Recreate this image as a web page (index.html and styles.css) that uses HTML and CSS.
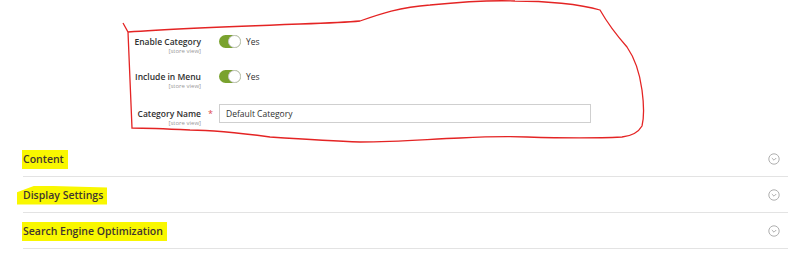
FILE: index.html
```html
<!DOCTYPE html>
<html lang="en">
<head>
    <meta charset="UTF-8">
    <title>Category</title>
    <link rel="stylesheet" href="styles.css">
</head>
<body>
<div class="page">

    <!-- General fields -->
    <fieldset class="general">
        <div class="field">
            <div class="field-label">
                <label>Enable Category</label>
                <span class="scope">[store view]</span>
            </div>
            <div class="field-control">
                <span class="switch"></span>
                <span class="switch-text">Yes</span>
            </div>
        </div>
        <div class="field">
            <div class="field-label">
                <label>Include in Menu</label>
                <span class="scope">[store view]</span>
            </div>
            <div class="field-control">
                <span class="switch"></span>
                <span class="switch-text">Yes</span>
            </div>
        </div>
        <div class="field field-name">
            <div class="field-label">
                <label class="required">Category Name</label>
                <span class="scope">[store view]</span>
            </div>
            <div class="field-control">
                <input class="input-text" type="text" value="Default Category">
            </div>
        </div>
    </fieldset>

    <!-- Collapsible sections -->
    <div class="sections">
        <div class="section">
            <span class="section-title"><mark class="hl">Content</mark></span>
            <svg class="chevron" width="12" height="12" viewBox="0 0 12 12"><circle cx="6" cy="6" r="5.2"/><path d="M3.8 5 L6 7.2 L8.2 5"/></svg>
        </div>
        <div class="section">
            <span class="section-title"><mark class="hl hl-slant">Display Settings</mark></span>
            <svg class="chevron" width="12" height="12" viewBox="0 0 12 12"><circle cx="6" cy="6" r="5.2"/><path d="M3.8 5 L6 7.2 L8.2 5"/></svg>
        </div>
        <div class="section">
            <span class="section-title"><mark class="hl">Search Engine Optimization</mark></span>
            <svg class="chevron" width="12" height="12" viewBox="0 0 12 12"><circle cx="6" cy="6" r="5.2"/><path d="M3.8 5 L6 7.2 L8.2 5"/></svg>
        </div>
    </div>

    <!-- Hand drawn annotation -->
    <svg class="annotation" width="800" height="254" viewBox="0 0 800 254">
        <path d="M123,23 L128,32 C170,29 220,27 300,24 C330,23 350,22 360,21 C380,14 400,7 430,5 C460,2 490,0 515,1 C545,1 580,4 600,10 C604,17 612,30 627,47 C636,60 640,75 642,90 C644,105 644,118 642,126 C638,133 632,136 622,137 C600,138 560,138 527,137 C500,136 480,137 460,138 C430,139 400,142 360,142 C330,141 300,139 270,137 C240,133 210,130 190,130 C170,129 150,128 132,128 C131,100 129,60 128,32"/>
    </svg>
</div>
</body>
</html>
```
FILE: styles.css
```css
/* General */
body {
    margin: 0;
    padding: 0;
    background: #fff;
    font-family: 'Open Sans', 'Liberation Sans', sans-serif;
    color: #303030;
}

.page {
    position: relative;
    width: 800px;
    height: 254px;
    overflow: hidden;
}

/* Fields */
.general {
    box-sizing: border-box;
    height: 141px;
    margin: 0;
    border: 0;
    padding: 36px 0 0 100px;
}

.field {
    display: grid;
    grid-template-columns: 101px 372px;
    column-gap: 18px;
    align-items: start;
    margin-bottom: 16px;
}

.field:nth-child(2) {
    margin-bottom: 14px;
}

.field-label {
    display: flex;
    flex-direction: column;
    text-align: right;
}

.field-label label {
    position: relative;
    font-size: 8.5px;
    line-height: 11px;
    font-weight: 600;
    color: #303030;
}

.field-label label.required::after {
    content: '*';
    position: absolute;
    right: -12px;
    top: 0;
    color: #e04848;
    font-size: 9px;
    font-weight: 400;
}

.scope {
    font-size: 6px;
    line-height: 8px;
    color: #999;
}

.field-control {
    display: flex;
    align-items: center;
    height: 11px;
}

/* Toggle switch */
.switch {
    position: relative;
    box-sizing: border-box;
    width: 22px;
    height: 13px;
    border-radius: 7px;
    background: #79a22e;
}

.switch::after {
    content: '';
    position: absolute;
    right: 0;
    top: 0;
    box-sizing: border-box;
    width: 13px;
    height: 13px;
    border-radius: 50%;
    background: #fff;
    border: 1px solid #c8c8c8;
}

.switch-text {
    margin-left: 5px;
    font-size: 8.5px;
    color: #303030;
}

.field-name .field-label {
    padding-top: 4px;
}

.field-name .field-control {
    height: 19px;
}

.input-text {
    box-sizing: border-box;
    width: 373px;
    height: 19px;
    margin: 0;
    padding: 0 6px;
    border: 1px solid #cfcfcf;
    font-family: 'Open Sans', 'Liberation Sans', sans-serif;
    font-size: 8.5px;
    color: #303030;
    outline: none;
}

/* Sections */
.sections {
    margin-left: 23px;
    width: 765px;
}

.section {
    display: flex;
    justify-content: space-between;
    align-items: center;
    height: 35px;
    padding-right: 8px;
    border-bottom: 1px solid #e3e3e3;
}

.section-title {
    font-size: 10.5px;
    font-weight: 600;
    color: #41362f;
}

.hl {
    background: #f9f700;
    color: #41362f;
    padding: 2px 4px 3px 1px;
    margin-left: -1px;
}

.hl-slant {
    padding-left: 6px;
    margin-left: -6px;
    clip-path: polygon(0 35%, 20% 0, 100% 10%, 100% 100%, 0 100%);
}

.chevron circle,
.chevron path {
    fill: none;
    stroke: #a6a6a6;
    stroke-width: 0.9;
}

/* Annotation overlay */
.annotation {
    position: absolute;
    left: 0;
    top: 0;
    pointer-events: none;
}

.annotation path {
    fill: none;
    stroke: #e42424;
    stroke-width: 1.3;
}
```
